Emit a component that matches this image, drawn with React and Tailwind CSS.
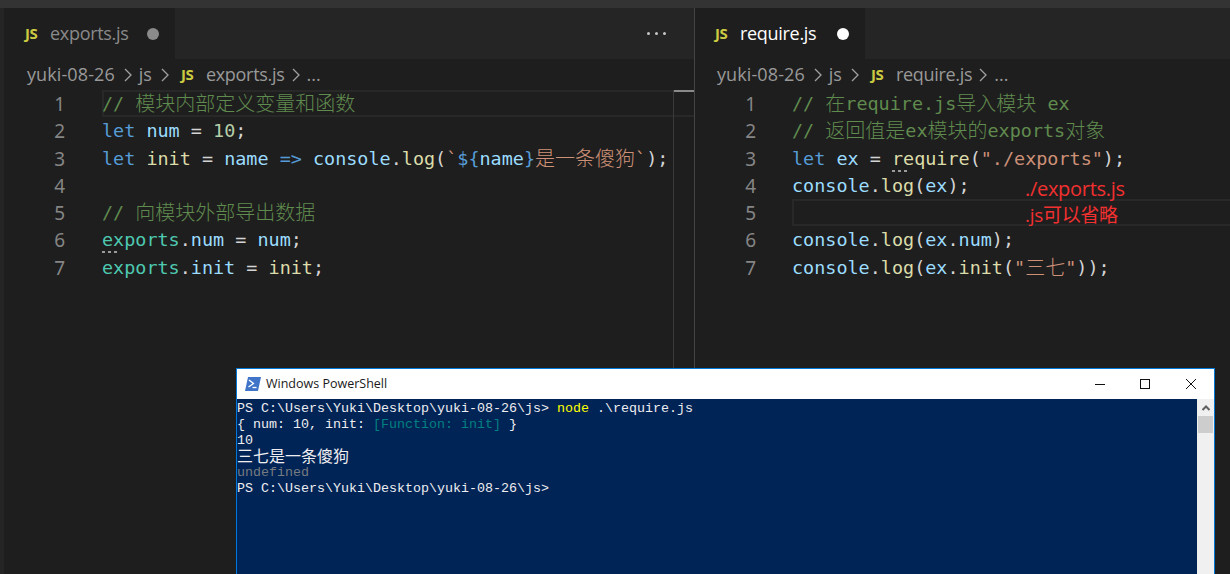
const kw = 'text-[#569cd6]'
const vr = 'text-[#9cdcfe]'
const fn = 'text-[#dcdcaa]'
const nm = 'text-[#b5cea8]'
const st = 'text-[#ce9178]'
const cm = 'text-[#608b4e]'
const cl = 'text-[#4ec9b0]'
const tx = 'text-[#d4d4d4]'

const leftLines = [
    [['// ', cm], ['模块内部定义变量和函数', cm, 1]],
    [['let', kw], [' ', tx], ['num', vr], [' = ', tx], ['10', nm], [';', tx]],
    [['let', kw], [' ', tx], ['init', fn], [' = ', tx], ['name', vr], [' ', tx], ['=>', kw], [' ', tx], ['console', vr], ['.', tx], ['log', fn], ['(', tx], ['`', st], ['${', kw], ['name', vr], ['}', kw], ['是一条傻狗', st, 1], ['`', st], [')', tx], [';', tx]],
    [],
    [['// ', cm], ['向模块外部导出数据', cm, 1]],
    [['exports', cl, 0, 1], ['.', tx], ['num', vr], [' = ', tx], ['num', vr], [';', tx]],
    [['exports', cl], ['.', tx], ['init', vr], [' = ', tx], ['init', fn], [';', tx]],
]

const rightLines = [
    [['// ', cm], ['在', cm, 1], ['require.js', cm], ['导入模块', cm, 1], [' ex', cm]],
    [['// ', cm], ['返回值是', cm, 1], ['ex', cm], ['模块的', cm, 1], ['exports', cm], ['对象', cm, 1]],
    [['let', kw], [' ', tx], ['ex', vr], [' = ', tx], ['require', fn, 0, 1], ['(', tx], ['"./exports"', st], [')', tx], [';', tx]],
    [['console', vr], ['.', tx], ['log', fn], ['(', tx], ['ex', vr], [')', tx], [';', tx]],
    [],
    [['console', vr], ['.', tx], ['log', fn], ['(', tx], ['ex', vr], ['.', tx], ['num', vr], [')', tx], [';', tx]],
    [['console', vr], ['.', tx], ['log', fn], ['(', tx], ['ex', vr], ['.', tx], ['init', fn], ['(', tx], ['"', st], ['三七', st, 1], ['"', st], [')', tx], [')', tx], [';', tx]],
]

const JsIcon = () => (
    <span className="inline-block w-[15px] font-['Open_Sans',sans-serif] text-[15px] font-bold leading-none text-[#cbcb41] tracking-[-0.5px]">JS</span>
)

const Chevron = () => (
    <svg width="10" height="16" viewBox="0 0 10 16" className="shrink-0" fill="none" stroke="#a0a0a0" strokeWidth="1.3">
        <path d="M2 2l6 6-6 6" />
    </svg>
)

const HintDots = () => (
    <span className="absolute left-0 top-[22px] flex gap-[3px]">
        <i className="h-[2px] w-[3px] bg-[#9a9a9a]" />
        <i className="h-[2px] w-[3px] bg-[#9a9a9a]" />
        <i className="h-[2px] w-[3px] bg-[#9a9a9a]" />
    </span>
)

const Token = ({ t }) => {
    const [text, color, cjk, hint] = t
    return (
        <span className={`${color} ${cjk ? "relative top-[1px] font-['Noto_Sans_CJK_SC',sans-serif] text-[20px] leading-none font-light" : ''} ${hint ? 'relative' : ''}`}>
            {text}
            {hint ? <HintDots /> : null}
        </span>
    )
}

const Editor = ({ lines, active, gutter }) => (
    <div className="font-['DejaVu_Sans_Mono',monospace] text-[18.45px]">
        {lines.map((line, i) => (
            <div key={i} className="flex h-[27.3px] leading-[28px]">
                <div className="w-[61px] shrink-0 text-right font-['Noto_Sans',sans-serif] text-[19px] text-[#858585]">{i + 1}</div>
                <div className={`${gutter} shrink-0`} />
                <div className={`flex-1 whitespace-pre ${i === active ? 'border-y-2 border-[#282828] leading-[24px] shadow-[inset_2px_0_0_#282828]' : ''}`}>
                    {line.map((t, j) => <Token key={j} t={t} />)}
                </div>
            </div>
        ))}
    </div>
)

const Breadcrumb = ({ file, pad }) => (
    <div className={`flex h-[31px] items-center ${pad} font-['Open_Sans',sans-serif] text-[18px] text-[#999999]`}>
        <span className="tracking-[0.1px]">yuki-08-26</span>
        <span className="ml-[8px]"><Chevron /></span>
        <span className="ml-[6px]">js</span>
        <span className="ml-[8px]"><Chevron /></span>
        <span className="ml-[11px] flex items-center"><JsIcon /></span>
        <span className="ml-[10px] tracking-[-0.3px]">{file}</span>
        <span className="ml-[6px]"><Chevron /></span>
        <span className="ml-[6px]">...</span>
    </div>
)

const ConsoleLine = ({ children, className = '' }) => (
    <div className={`h-[16px] whitespace-pre leading-[16px] text-[#eeedf0] ${className}`}>{children}</div>
)

const PowerShell = () => (
    <div className="absolute left-[236px] top-[368px] flex h-[220px] w-[979px] flex-col border border-[#0078d7] bg-white">
        <div className="flex h-[30px] shrink-0 items-center">
            <svg width="16" height="14" viewBox="0 0 16 14" className="ml-[8px]">
                <path d="M3 0h13l-3 14H0z" fill="#3f74c9" />
                <path d="M4 3l4.5 3.5L3.5 10" fill="none" stroke="#fff" strokeWidth="1.3" />
                <path d="M7.5 10.5h4" stroke="#fff" strokeWidth="1.3" />
            </svg>
            <span className="ml-[5px] font-['Open_Sans',sans-serif] text-[12.5px] text-[#1a1a1a]">Windows PowerShell</span>
            <div className="ml-auto flex items-center">
                <svg width="10" height="10" viewBox="0 0 10 10" className="mr-[35px]"><path d="M0 5.5h10" stroke="#111" /></svg>
                <svg width="10" height="10" viewBox="0 0 10 10" className="mr-[36px]"><rect x="0.5" y="0.5" width="9" height="9" fill="none" stroke="#111" /></svg>
                <svg width="10" height="10" viewBox="0 0 10 10" className="mr-[18px]"><path d="M0 0l10 10M10 0L0 10" stroke="#111" /></svg>
            </div>
        </div>
        <div className="flex flex-1">
            <div className="flex-1 bg-[#012456] pt-[2px] font-['Liberation_Mono',monospace] text-[13.33px]">
                <ConsoleLine>PS C:\Users\Yuki\Desktop\yuki-08-26\js&gt; <span className="text-[#ffff00]">node</span> .\require.js</ConsoleLine>
                <ConsoleLine>{'{ num: 10, init: '}<span className="text-[#008080]">[Function: init]</span>{' }'}</ConsoleLine>
                <ConsoleLine>10</ConsoleLine>
                <ConsoleLine className="-translate-y-[2px] font-['Noto_Sans_CJK_SC',sans-serif] text-[16px]">三七是一条傻狗</ConsoleLine>
                <ConsoleLine className="!text-[#767b80]">undefined</ConsoleLine>
                <ConsoleLine>PS C:\Users\Yuki\Desktop\yuki-08-26\js&gt;</ConsoleLine>
            </div>
            <div className="flex w-[17px] shrink-0 flex-col items-center bg-[#f0f0f0]">
                <svg width="10" height="17" viewBox="0 0 10 17" fill="none" stroke="#606060" strokeWidth="2"><path d="M1.5 11L5 7.5 8.5 11" /></svg>
                <div className="h-[17px] w-[15px] bg-[#cdcdcd]" />
            </div>
        </div>
    </div>
)

const App = () => {
    return (
        <div className="relative flex h-screen flex-col overflow-hidden bg-[#1e1e1e]">
            <div className="h-[8px] shrink-0 bg-[#333333]" />
            <div className="flex flex-1">
                {/* left pane */}
                <div className="relative flex w-[694px] shrink-0 flex-col border-l-4 border-[#252526]">
                    <div className="flex h-[51px] shrink-0 items-center bg-[#252526]">
                        <div className="flex h-full w-[171px] items-center bg-[#1e1e1e] pl-[21px]">
                            <JsIcon />
                            <span className="ml-[10px] font-['Open_Sans',sans-serif] text-[18px] tracking-[-0.3px] text-[#8a8a8a]">exports.js</span>
                            <span className="ml-[18px] h-[12px] w-[12px] rounded-full bg-[#8a8a8a]" />
                        </div>
                        <div className="ml-auto mr-[28px] flex gap-[5px]">
                            <i className="h-[3px] w-[3px] rounded-full bg-[#c5c5c5]" />
                            <i className="h-[3px] w-[3px] rounded-full bg-[#c5c5c5]" />
                            <i className="h-[3px] w-[3px] rounded-full bg-[#c5c5c5]" />
                        </div>
                    </div>
                    <Breadcrumb file="exports.js" pad="pl-[23px]" />
                    <Editor lines={leftLines} active={0} gutter="w-[37px]" />
                    {/* overview ruler */}
                    <div className="absolute bottom-0 right-0 top-[82px] w-[21px] border-l border-[#3a3a3a]">
                        <div className="h-[2px] bg-[#8a8a8a]" />
                    </div>
                </div>
                {/* right pane */}
                <div className="relative flex flex-1 flex-col border-l border-[#444444]">
                    <div className="flex h-[51px] shrink-0 items-center bg-[#252526]">
                        <div className="flex h-full w-[170px] items-center bg-[#1e1e1e] pl-[20px]">
                            <JsIcon />
                            <span className="ml-[10px] font-['Open_Sans',sans-serif] text-[18px] tracking-[-0.3px] text-white">require.js</span>
                            <span className="ml-[21px] h-[12px] w-[12px] rounded-full bg-white" />
                        </div>
                    </div>
                    <Breadcrumb file="require.js" pad="pl-[22px]" />
                    <Editor lines={rightLines} active={4} gutter="w-[36px]" />
                </div>
            </div>
            {/* red note drawn over the screenshot */}
            <div className="absolute left-[1025px] top-[176px] font-['Open_Sans','Noto_Sans_CJK_SC',sans-serif] text-[20px] leading-[26px] tracking-[-0.3px] text-[#f23030]">
                <div>./exports.js</div>
                <div className="text-[19px]">.js可以省略</div>
            </div>
            <PowerShell />
        </div>
    )
}

export default App
